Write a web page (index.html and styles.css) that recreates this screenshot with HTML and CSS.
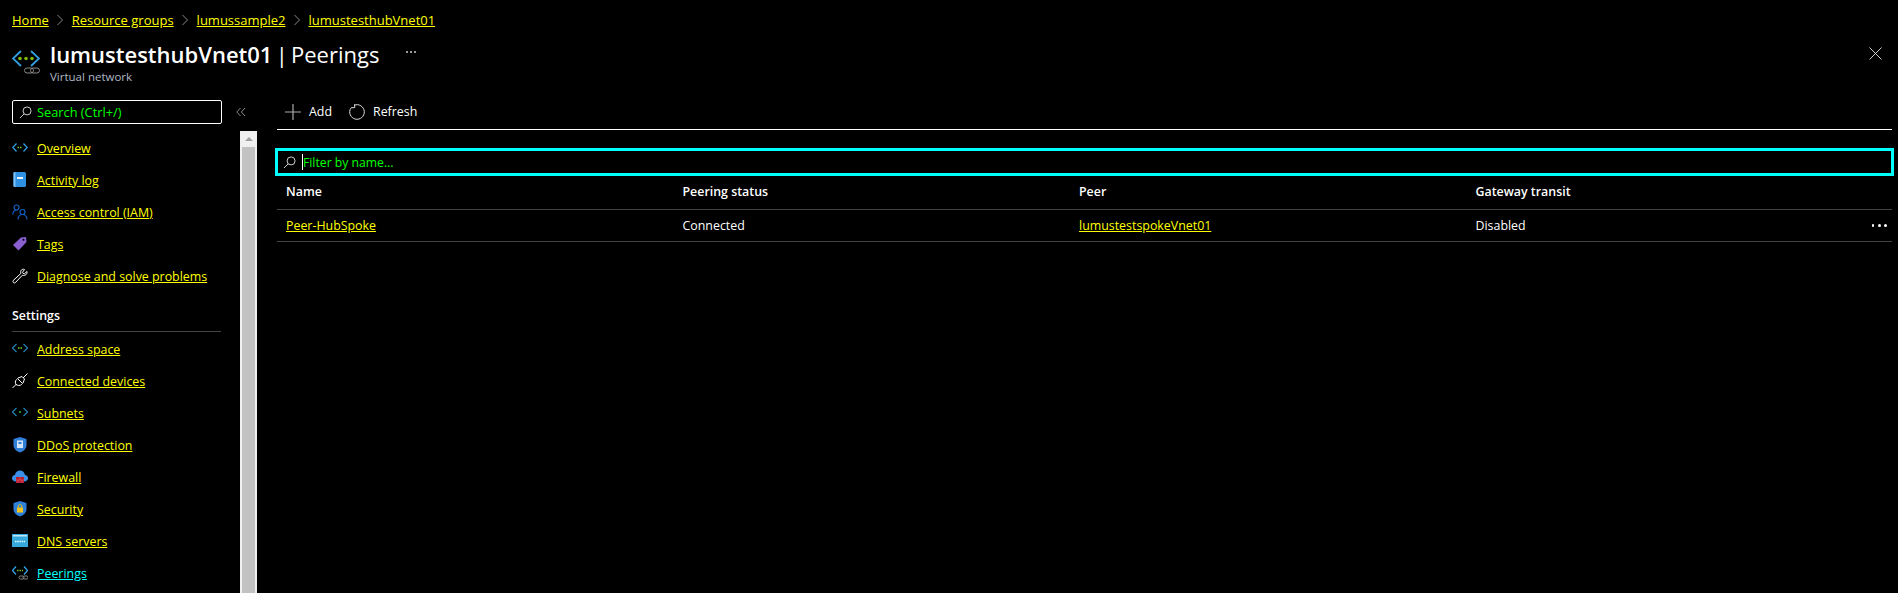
FILE: index.html
```html
<!DOCTYPE html>
<html lang="en">

<head>
  <meta charset="UTF-8">
  <meta name="viewport" content="width=device-width, initial-scale=1.0">
  <title>lumustesthubVnet01 | Peerings</title>
  <link rel="stylesheet" href="styles.css">
</head>

<body>
  <nav class="breadcrumb">
    <a href="#">Home</a>
    <svg class="chevron" viewBox="0 0 8 12"><path d="M1.5 1 6.5 6 1.5 11" /></svg>
    <a href="#">Resource groups</a>
    <svg class="chevron" viewBox="0 0 8 12"><path d="M1.5 1 6.5 6 1.5 11" /></svg>
    <a href="#">lumussample2</a>
    <svg class="chevron" viewBox="0 0 8 12"><path d="M1.5 1 6.5 6 1.5 11" /></svg>
    <a href="#">lumustesthubVnet01</a>
  </nav>

  <header class="page-header">
    <svg class="header-icon" viewBox="0 0 28 24">
      <path class="icon-blue" d="M9 1 1 8.5 9 16M19 1 27 8.500 19 16" />
      <circle class="dot-green" cx="8" cy="8.500" r="1.800" />
      <circle class="dot-green" cx="14" cy="8.500" r="1.800" />
      <circle class="dot-green" cx="20" cy="8.500" r="1.800" />
      <rect class="icon-link" x="12.500" y="18" width="9" height="5" rx="2.500" />
      <rect class="icon-link" x="18.500" y="18" width="9" height="5" rx="2.500" />
    </svg>
    <div class="title-block">
      <h1><strong>lumustesthubVnet01</strong> | Peerings</h1>
      <p>Virtual network</p>
    </div>
    <span class="more"><i></i><i></i><i></i></span>
    <svg class="close" viewBox="0 0 13 13"><path d="M.5.5 12.500 12.500M12.500.5.5 12.500" /></svg>
  </header>

  <div class="layout">
    <aside class="sidebar">
      <div class="sidebar-top">
        <div class="search-box">
          <svg class="search-icon" viewBox="0 0 14 14"><circle cx="8.700" cy="5.300" r="4.300" /><path d="M5.500 8.500 1 13" /></svg>
          <span>Search (Ctrl+/)</span>
        </div>
        <svg class="collapse" viewBox="0 0 10 10"><path d="M4.500 1 .8 5 4.500 9M9 1 5.300 5 9 9" /></svg>
      </div>

      <div class="sidebar-body">
        <ul class="menu menu-first">
          <li>
            <svg class="icon" viewBox="0 0 16 16">
              <path class="icon-blue" d="M4.500 3.500.8 7.500 4.500 11.500M11.500 3.500 15.200 7.500 11.500 11.500" />
              <path class="icon-dots" d="M5.500 7.500h5" />
            </svg>
            <a href="#">Overview</a>
          </li>
          <li>
            <svg class="icon" viewBox="0 0 16 16">
              <rect x="1.500" y="0" width="12.500" height="15" rx="1.500" fill="#2f8fe0" />
              <rect x="1.500" y="0" width="2" height="15" rx="1" fill="#7cc0f5" />
              <rect x="5" y="5" width="6" height="2" fill="#e8f4ff" />
            </svg>
            <a href="#">Activity log</a>
          </li>
          <li>
            <svg class="icon" viewBox="0 0 16 16">
              <g fill="none" stroke="#0f5fc0" stroke-width="1.200">
                <circle cx="4.500" cy="3.500" r="2.500" />
                <path d="M.8 10.500c.3-3 2-4.500 4-4.500" />
                <circle cx="10.500" cy="8" r="2.500" />
                <path d="M6 15.500c.3-3 2-5 4.500-5s4.200 2 4.500 5" />
              </g>
            </svg>
            <a href="#">Access control (IAM)</a>
          </li>
          <li>
            <svg class="icon" viewBox="0 0 16 16">
              <path d="M1 9 9 1.500 14 1 14.500 6 6.500 14.500z" fill="#8a5fd0" />
              <circle cx="11.500" cy="3.800" r="1" fill="#000" />
            </svg>
            <a href="#">Tags</a>
          </li>
          <li>
            <svg class="icon" viewBox="0 0 16 16">
              <path class="icon-white" d="M15 3.500 12.200 6 10.300 4.500 12.500 1.500C10 .5 8 2.500 8.800 5.500L1.200 12.500C.300 14 2 15.700 3.300 14.700L10.300 7.300C13.500 8 15.500 6 15 3.500z" />
            </svg>
            <a href="#">Diagnose and solve problems</a>
          </li>
        </ul>

        <h2 class="menu-heading">Settings</h2>

        <ul class="menu">
          <li>
            <svg class="icon" viewBox="0 0 16 16">
              <path class="icon-teal" d="M4.500 3 .5 7 4.500 11M11.500 3 15.500 7 11.500 11" />
              <circle cx="6.800" cy="7" r=".9" fill="#5cae20" />
              <circle cx="9.200" cy="7" r=".9" fill="#5cae20" />
            </svg>
            <a href="#">Address space</a>
          </li>
          <li>
            <svg class="icon" viewBox="0 0 16 16">
              <path class="icon-white" d="M.5 15 4.500 11M11 5 15.500.500M5.500 5.500 10.500 10.500 9.500 11.500C8 13 5.500 12.500 4 11.500 3 10 3 8 4.500 6.500zM6 5 10 3.500 12.500 6 11 10" />
            </svg>
            <a href="#">Connected devices</a>
          </li>
          <li>
            <svg class="icon" viewBox="0 0 16 16">
              <path class="icon-teal" d="M4.500 3 .5 7 4.500 11M11.500 3 15.500 7 11.500 11" />
              <circle cx="8" cy="7" r="1" fill="#40b040" />
            </svg>
            <a href="#">Subnets</a>
          </li>
          <li>
            <svg class="icon" viewBox="0 0 16 16">
              <path d="M8 0 14.500 2V8C14.500 12 11 14.500 8 15.500 5 14.500 1.500 12 1.500 8V2z" fill="#2f7fd8" />
              <rect x="5" y="3.500" width="6" height="7.500" fill="#cfe4f8" />
              <rect x="6.500" y="5" width="3" height="2" fill="#2f7fd8" />
            </svg>
            <a href="#">DDoS protection</a>
          </li>
          <li>
            <svg class="icon" viewBox="0 0 16 16">
              <path d="M4 12.500C1.500 12.500 0 11 0 9.300 0 7.500 1.300 6.200 3 6 3.300 3 5.500 1.500 8 1.500 10.500 1.500 12.500 3.300 13 6 14.800 6.200 16 7.500 16 9.300 16 11 14.500 12.500 12 12.500z" fill="#3a8fe8" />
              <rect x="4" y="8" width="8" height="6" fill="#b81c2c" />
              <path d="M4 11h8M8 8v3M6 11v3M10 11v3" stroke="#e06070" stroke-width=".600" />
            </svg>
            <a href="#">Firewall</a>
          </li>
          <li>
            <svg class="icon" viewBox="0 0 16 16">
              <path d="M8 0 14.500 2V8C14.500 12 11 14.500 8 15.500 5 14.500 1.500 12 1.500 8V2z" fill="#2f7fd8" />
              <rect x="5" y="6.500" width="6" height="5" fill="#f5c518" />
              <path d="M6.300 6.500V5C6.300 3 9.700 3 9.700 5V6.500" fill="none" stroke="#f5c518" stroke-width="1" />
            </svg>
            <a href="#">Security</a>
          </li>
          <li>
            <svg class="icon" viewBox="0 0 16 16">
              <rect x="0" y="1" width="16" height="13" fill="#35a8dc" />
              <rect x="1" y="2" width="14" height="1.500" fill="#bfe6f8" />
              <path d="M3 8.500h10" stroke="#e6f6ff" stroke-width="1.500" stroke-dasharray="1.500 .700" />
            </svg>
            <a href="#">DNS servers</a>
          </li>
          <li>
            <svg class="icon" viewBox="0 0 16 16">
              <path class="icon-blue" d="M4 1.500.5 5.500 4 9.500M12 1.500 15.500 5.500 12 9.500" />
              <path class="icon-dots" d="M5 5.500h6" />
              <rect class="icon-link" x="7" y="11" width="5" height="3" rx="1.400" />
              <rect class="icon-link" x="11" y="11" width="5" height="3" rx="1.400" />
            </svg>
            <a class="active" href="#">Peerings</a>
          </li>
        </ul>

        <div class="scrollbar">
          <div class="scroll-up"><span></span></div>
          <div class="scroll-thumb"></div>
        </div>
      </div>
    </aside>

    <main class="content">
      <div class="toolbar">
        <button class="tool tool-add">
          <svg class="tool-plus" viewBox="0 0 16 16"><path d="M8 0v16M0 8h16" /></svg>
          Add
        </button>
        <button class="tool">
          <svg class="tool-refresh" viewBox="0 0 16 16"><path d="M5.300 1.200A7.300 7.300 0 1 1 1.700 4.300M5.500.3 5.800 3.600 2 3.800" /></svg>
          Refresh
        </button>
      </div>

      <div class="filter">
        <svg class="search-icon" viewBox="0 0 14 14"><circle cx="8.700" cy="5.300" r="4.300" /><path d="M5.500 8.500 1 13" /></svg>
        <span class="caret"></span>
        <span>Filter by name...</span>
      </div>

      <table class="peer-table">
        <thead>
          <tr>
            <th>Name</th>
            <th>Peering status</th>
            <th>Peer</th>
            <th>Gateway transit</th>
            <th class="actions"></th>
          </tr>
        </thead>
        <tbody>
          <tr>
            <td><a href="#">Peer-HubSpoke</a></td>
            <td>Connected</td>
            <td><a href="#">lumustestspokeVnet01</a></td>
            <td>Disabled</td>
            <td class="actions"><span class="row-dots"><i></i><i></i><i></i></span></td>
          </tr>
        </tbody>
      </table>
    </main>
  </div>
</body>

</html>
```

FILE: styles.css
```css
* {
  box-sizing: border-box;
}

html,
body {
  height: 100%;
}

body {
  margin: 0;
  overflow: hidden;
  background-color: #000;
  color: #fff;
  font-family: "Open Sans", "Noto Sans", Arial, sans-serif;
  font-size: 12.4px;
}

a {
  color: #ff0;
  text-decoration: underline;
}

svg {
  flex: none;
}

.breadcrumb {
  display: flex;
  align-items: center;
  gap: 7.5px;
  height: 40px;
  padding: 0 12px;
  font-size: 13px;
}

.chevron {
  width: 8px;
  height: 12px;
  fill: none;
  stroke: #888;
  stroke-width: 1;
}

.page-header {
  display: flex;
  align-items: flex-start;
  height: 50px;
  padding: 0 0 0 12px;
}

.header-icon {
  width: 28px;
  height: 24px;
  margin-top: 10px;
  fill: none;
}

.icon-blue,
.icon-teal {
  fill: none;
  stroke: #32a0e0;
  stroke-width: 1.300;
}

.header-icon .icon-blue {
  stroke-width: 1.800;
}

.icon-teal {
  stroke: #1e7fa8;
}

.icon-dots {
  fill: none;
  stroke: #6cc024;
  stroke-width: 1.500;
  stroke-dasharray: 1.500 1;
}

.icon-link {
  fill: none;
  stroke: #888;
  stroke-width: 1;
}

.icon-white {
  fill: none;
  stroke: #fff;
  stroke-width: 1;
}

.dot-green {
  fill: #7fba00;
}

.title-block {
  margin-left: 10px;
}

h1 {
  margin: 0;
  height: 28px;
  font-size: 22px;
  font-weight: 400;
  line-height: 28px;
  word-spacing: -2.5px;
}

h1 strong {
  font-weight: 600;
}

.title-block p {
  margin: 1px 0 0;
  font-size: 11.5px;
  color: #b0b8c4;
}

.more {
  display: flex;
  gap: 2px;
  margin: 11px 0 0 27px;
}

.more i {
  width: 2px;
  height: 2px;
  background-color: #999;
}

.close {
  width: 13px;
  height: 13px;
  margin: 7px 16px 0 auto;
  fill: none;
  stroke: #fff;
  stroke-width: .8;
}

.layout {
  display: flex;
  height: 503px;
}

.sidebar {
  display: flex;
  flex-direction: column;
  width: 258px;
  padding-left: 12px;
}

.sidebar-top {
  display: flex;
  align-items: flex-start;
  height: 41px;
  padding-top: 10px;
}

.search-box {
  display: flex;
  align-items: center;
  gap: 5px;
  width: 210px;
  height: 24px;
  padding: 0 6px;
  border: 1px solid #fff;
  border-radius: 2px;
  color: #0f0;
  font-size: 12.8px;
}

.search-icon {
  width: 13px;
  height: 13px;
  fill: none;
  stroke: #ddd;
  stroke-width: 1;
}

.collapse {
  width: 10px;
  height: 10px;
  margin: 7px 0 0 14px;
  fill: none;
  stroke: #888;
  stroke-width: 1;
}

.sidebar-body {
  display: flex;
  flex-direction: column;
  position: relative;
  flex: 1;
}

.menu {
  margin: 0;
  padding: 0;
  list-style: none;
}

.menu-first {
  margin-top: 1px;
}

.menu li {
  display: flex;
  align-items: center;
  gap: 9px;
  width: 210px;
  height: 32px;
}

.icon {
  width: 16px;
  height: 16px;
}

.active {
  color: #0ff;
}

.menu-heading {
  width: 209px;
  height: 33px;
  margin: 7px 0 1px;
  padding-top: 8px;
  border-bottom: 1px solid #444;
  font-size: 12.4px;
  font-weight: 600;
}

.scrollbar {
  position: absolute;
  top: 0;
  bottom: 0;
  left: 228px;
  width: 17px;
  padding: 0 2px;
  background-color: #f0f0f0;
}

.scroll-up {
  display: flex;
  justify-content: center;
  height: 16px;
  padding-top: 6px;
}

.scroll-up span {
  width: 0;
  height: 0;
  border-left: 4px solid transparent;
  border-right: 4px solid transparent;
  border-bottom: 4px solid #a0a0a0;
}

.scroll-thumb {
  height: 100%;
  background-color: #c2c2c2;
}

.content {
  flex: 1;
  padding: 0 6px 0 19px;
}

.toolbar {
  display: flex;
  align-items: center;
  gap: 17px;
  height: 40px;
  padding-top: 4px;
  border-bottom: 1px solid #fff;
}

.tool {
  display: flex;
  align-items: center;
  gap: 8px;
  padding: 0;
  border: none;
  background: none;
  color: #fff;
  font: inherit;
}

.tool-add {
  padding-left: 8px;
}

.tool-plus {
  width: 16px;
  height: 16px;
  fill: none;
  stroke: #aaa;
  stroke-width: 1.200;
}

.tool-refresh {
  width: 16px;
  height: 16px;
  fill: none;
  stroke: #ddd;
  stroke-width: 1;
}

.filter {
  display: flex;
  align-items: center;
  height: 28px;
  margin: 18px -2px 0;
  padding: 0 5px;
  border: 3px solid #0ff;
  color: #0f0;
  font-size: 12.2px;
}

.caret {
  width: 1px;
  height: 16px;
  margin-left: 6px;
  background-color: #fff;
}

.peer-table {
  width: 100%;
  border-collapse: collapse;
  table-layout: fixed;
}

.peer-table th,
.peer-table td {
  padding: 0 0 0 9px;
  border-bottom: 1px solid #444;
  text-align: left;
}

.peer-table th {
  height: 33px;
  padding-bottom: 2px;
  font-weight: 600;
}

.peer-table td {
  height: 32px;
}

.peer-table th:nth-child(-n+3) {
  width: 396.500px;
}

.peer-table th:nth-child(4) {
  width: 396px;
}

.peer-table .actions {
  padding-right: 5px;
}

.row-dots {
  display: flex;
  justify-content: flex-end;
  gap: 3.500px;
}

.row-dots i {
  width: 3px;
  height: 3px;
  border-radius: 50%;
  background-color: #fff;
}
```
